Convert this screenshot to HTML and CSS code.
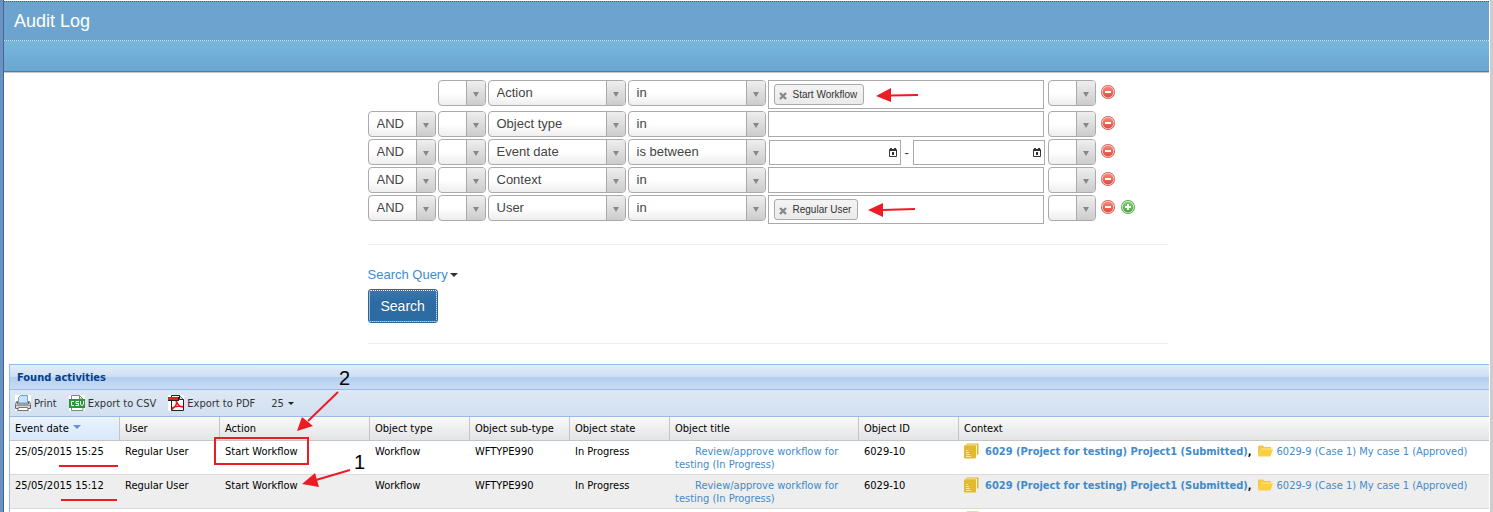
FILE: index.html
```
<!DOCTYPE html>
<html lang="en">
<head>
<meta charset="utf-8">
<title>Audit Log</title>
<link rel="stylesheet" href="styles.css">
</head>
<body>
<svg class="defs" aria-hidden="true">
  <defs>
    <linearGradient id="red" x2="0" y2="1"><stop offset="0" stop-color="#f58a7a"/><stop offset="1" stop-color="#e2483b"/></linearGradient>
    <linearGradient id="green" x2="0" y2="1"><stop offset="0" stop-color="#8fd07a"/><stop offset="1" stop-color="#46a53c"/></linearGradient>
    <symbol id="minus" viewBox="0 0 14 14"><circle cx="7" cy="7" r="7" fill="#c9594f"/><circle cx="7" cy="7" r="6.200" fill="#fbd0c9"/><circle cx="7" cy="7" r="5.400" fill="url(#red)"/><rect x="4" y="6" width="6" height="2" fill="#fff"/></symbol>
    <symbol id="plus" viewBox="0 0 14 14"><circle cx="7" cy="7" r="7" fill="#55a04e"/><circle cx="7" cy="7" r="6.200" fill="#d4efca"/><circle cx="7" cy="7" r="5.400" fill="url(#green)"/><path d="M4 6h2V4h2v2h2v2H8v2H6V8H4z" fill="#fff"/></symbol>
    <symbol id="calendar" viewBox="0 0 8 9"><path d="M.5 1.5h7v7h-7z" fill="#fff" stroke="#333"/><path d="M0 2h8v1H0zM1 0h2v2H1zM5 0h2v2H5zM3 4h2v3H3z" fill="#333"/></symbol>
    <symbol id="book" viewBox="0 0 15 16"><path d="M1 2.500 3 .500h11.500V11l-2 1.500z" fill="#e2b534"/><path d="M1.500 2h11v11" fill="none" stroke="#fff3c4"/><rect y="2.500" width="12" height="13" rx="1" fill="#e2b92f"/><path d="M2 7.500h1.500M2 9.500h3M2 11.500h4M2 13.500h5" stroke="#fbe9a8"/></symbol>
    <symbol id="folder" viewBox="0 0 15 12"><path d="M0 11V1.500L1 .500h4L6.500 2H13v3H3z" fill="#f2c84b"/><path d="M0 11.500 3.200 4H15L12.500 11.500z" fill="#fbd03e"/><path d="M3.200 4H14.500" stroke="#ffe690"/></symbol>
  </defs>
</svg>

<div class="page">
  <header class="banner">
    <h1 class="banner-title">Audit Log</h1>
    <div class="banner-strip"></div>
  </header>

  <main>
    <form class="query">
      <div class="criterion">
        <span></span>
        <span class="pick"><select aria-label="Open bracket"><option></option></select></span>
        <span class="pick"><select aria-label="Field"><option>Action</option></select></span>
        <span class="pick"><select aria-label="Operator"><option>in</option></select></span>
        <div class="tokens tokens-filled"><span class="token"><button type="button" class="token-remove" aria-label="Remove Start Workflow"><svg viewBox="0 0 8 8"><path d="M1 1l6 6M7 1l-6 6" stroke="#888" stroke-width="2.400"/></svg></button>Start Workflow</span></div>
        <span class="pick"><select aria-label="Close bracket"><option></option></select></span>
        <div class="row-tools"><button type="button" class="tool" aria-label="Remove condition"><svg><use href="#minus"/></svg></button></div>
      </div>
      <div class="criterion">
        <span class="pick"><select aria-label="Logic"><option>AND</option></select></span>
        <span class="pick"><select aria-label="Open bracket"><option></option></select></span>
        <span class="pick"><select aria-label="Field"><option>Object type</option></select></span>
        <span class="pick"><select aria-label="Operator"><option>in</option></select></span>
        <input class="tokens" type="text" aria-label="Object type value">
        <span class="pick"><select aria-label="Close bracket"><option></option></select></span>
        <div class="row-tools"><button type="button" class="tool" aria-label="Remove condition"><svg><use href="#minus"/></svg></button></div>
      </div>
      <div class="criterion">
        <span class="pick"><select aria-label="Logic"><option>AND</option></select></span>
        <span class="pick"><select aria-label="Open bracket"><option></option></select></span>
        <span class="pick"><select aria-label="Field"><option>Event date</option></select></span>
        <span class="pick"><select aria-label="Operator"><option>is between</option></select></span>
        <div class="range">
          <span class="date"><input type="text" aria-label="From date"><svg><use href="#calendar"/></svg></span>
          <span>-</span>
          <span class="date"><input type="text" aria-label="To date"><svg><use href="#calendar"/></svg></span>
        </div>
        <span class="pick"><select aria-label="Close bracket"><option></option></select></span>
        <div class="row-tools"><button type="button" class="tool" aria-label="Remove condition"><svg><use href="#minus"/></svg></button></div>
      </div>
      <div class="criterion">
        <span class="pick"><select aria-label="Logic"><option>AND</option></select></span>
        <span class="pick"><select aria-label="Open bracket"><option></option></select></span>
        <span class="pick"><select aria-label="Field"><option>Context</option></select></span>
        <span class="pick"><select aria-label="Operator"><option>in</option></select></span>
        <input class="tokens" type="text" aria-label="Context value">
        <span class="pick"><select aria-label="Close bracket"><option></option></select></span>
        <div class="row-tools"><button type="button" class="tool" aria-label="Remove condition"><svg><use href="#minus"/></svg></button></div>
      </div>
      <div class="criterion">
        <span class="pick"><select aria-label="Logic"><option>AND</option></select></span>
        <span class="pick"><select aria-label="Open bracket"><option></option></select></span>
        <span class="pick"><select aria-label="Field"><option>User</option></select></span>
        <span class="pick"><select aria-label="Operator"><option>in</option></select></span>
        <div class="tokens tokens-filled"><span class="token"><button type="button" class="token-remove" aria-label="Remove Regular User"><svg viewBox="0 0 8 8"><path d="M1 1l6 6M7 1l-6 6" stroke="#888" stroke-width="2.400"/></svg></button>Regular User</span></div>
        <span class="pick"><select aria-label="Close bracket"><option></option></select></span>
        <div class="row-tools"><button type="button" class="tool" aria-label="Remove condition"><svg><use href="#minus"/></svg></button><button type="button" class="tool" aria-label="Add condition"><svg><use href="#plus"/></svg></button></div>
      </div>

      <div class="actions">
        <a href="#" class="query-link">Search Query<span class="caret"></span></a>
        <button type="submit" class="search">Search</button>
      </div>
    </form>

    <section class="panel">
      <h2 class="panel-title">Found activities</h2>
      <div class="toolbar">
        <button type="button"><svg class="icon" viewBox="0 0 16 16"><path fill="#fff" d="M0 0h16v16H0z"/><path d="M3.500 8V2.500l2-2H12.500V8z" fill="#c9e3fb" stroke="#6d9fd6"/><path d="M2.500 6.500H1.500l-1 3v4h15v-4l-1-3h-1v2.500h-11z" fill="#d8d8d8" stroke="#666"/><path d="M1 10.500h14" stroke="#999"/><path d="M3.500 12.500h9l1 3h-11z" fill="#fff" stroke="#777"/></svg>Print</button>
        <button type="button"><svg class="icon" viewBox="0 0 16 16"><path fill="#fff" d="M0 0h16v16H0z"/><path d="M2.500.500h8L14 4v11.500H2.500z" fill="#fff" stroke="#5aa55a"/><path d="M10.500.500V4H14" fill="none" stroke="#5aa55a"/><path d="M0 4h16v9H0z" fill="#319536"/><path d="M5 6.500H2.500v4H5M10 6.500H7v2h2.500v2H6.500M11.500 6v3l1 1.500h1l1-1.500V6" fill="none" stroke="#fff"/></svg>Export to CSV</button>
        <button type="button"><svg class="icon" viewBox="0 0 16 16"><path fill="#fff" d="M0 0h16v16H0z"/><path d="M3.500.500h8l4 4v11h-12z" fill="#fff" stroke="#222"/><path d="M11.500.500v4h4" fill="#ddd" stroke="#222"/><path d="M0 2h11v4H0z" fill="#222"/><path d="M0 2h10v3H0z" fill="#ed1c1c"/><path d="M7.500 6.500c2 0 1 5-3 7.500-1-1.500 3-3.500 10-2.500 1 1-4 1-6-5" fill="none" stroke="#e51515" stroke-width="1.400"/></svg>Export to PDF</button>
        <button type="button" class="page-size">25<span class="caret caret-small"></span></button>
      </div>
      <table class="grid">
        <colgroup><col class="w-date"><col class="w-user"><col class="w-action"><col class="w-std"><col class="w-std"><col class="w-std"><col class="w-title"><col class="w-std"><col></colgroup>
        <thead>
          <tr><th class="sorted">Event date<span class="sort"></span></th><th>User</th><th>Action</th><th>Object type</th><th>Object sub-type</th><th>Object state</th><th>Object title</th><th>Object ID</th><th>Context</th></tr>
        </thead>
        <tbody>
          <tr><td>25/05/2015 15:25</td><td>Regular User</td><td>Start Workflow</td><td>Workflow</td><td>WFTYPE990</td><td>In Progress</td><td><a href="#" class="title-link">Review/approve workflow for testing (In Progress)</a></td><td>6029-10</td><td><div class="context"><svg class="book"><use href="#book"/></svg><b><a href="#">6029 (Project for testing) Project1 (Submitted)</a>,</b><svg class="folder"><use href="#folder"/></svg><a href="#">6029-9 (Case 1) My case 1 (Approved)</a></div></td></tr>
          <tr><td>25/05/2015 15:12</td><td>Regular User</td><td>Start Workflow</td><td>Workflow</td><td>WFTYPE990</td><td>In Progress</td><td><a href="#" class="title-link">Review/approve workflow for testing (In Progress)</a></td><td>6029-10</td><td><div class="context"><svg class="book"><use href="#book"/></svg><b><a href="#">6029 (Project for testing) Project1 (Submitted)</a>,</b><svg class="folder"><use href="#folder"/></svg><a href="#">6029-9 (Case 1) My case 1 (Approved)</a></div></td></tr>
          <tr><td></td><td></td><td></td><td></td><td></td><td></td><td></td><td></td><td><div class="context"><svg class="book"><use href="#book"/></svg></div></td></tr>
        </tbody>
      </table>
    </section>
  </main>
</div>

<svg class="notes">
  <g fill="#ed1c24">
    <path d="M876 96l15-8v14zM868 210l15-7v14zM297 431l5-14 11 9zM302 484l13-11 4 14z"/>
  </g>
  <g fill="none" stroke="#ed1c24" stroke-width="2">
    <path d="M890 95.500 918 95M882 210l33-1M308 421l30-29M316 480l34-10M59 466h59M61 500h56M215 438h93v26h-93z"/>
  </g>
  <text x="339" y="385">2</text>
  <text x="354" y="469">1</text>
</svg>
</body>
</html>
```
FILE: styles.css
```
* { box-sizing: border-box; }

body {
  margin: 0;
  height: 100vh;
  overflow: hidden;
  position: relative;
  background: #fff;
  color: #333;
  font-family: "Liberation Sans", Arial, sans-serif;
  font-size: 13px;
}

button, input, select { font: inherit; color: inherit; margin: 0; }
button { cursor: pointer; }
a { color: #428bca; text-decoration: none; }
.defs { position: absolute; width: 0; height: 0; }

.page {
  height: 100vh;
  overflow: hidden;
  border-left: 3px solid #6a93c1;
  border-right: 3px solid #cdcdcd;
  padding-right: 1px;
}
.page > * { border-left: 1px solid #3f6797; }
main { min-height: 100vh; }

.banner { padding-top: 1px; }
.banner-title {
  margin: 0;
  padding: 0 10px;
  height: 40px;
  line-height: 39px;
  border-top: 1px dotted #2f6f5c;
  border-bottom: 1px dotted #d5e6f1;
  background: #6ca4cf;
  color: #fff;
  font-size: 18px;
  font-weight: normal;
}
.banner-strip {
  height: 32px;
  background: linear-gradient(#76b7dd, #6ba5d0);
  border-bottom: 1px solid #c5c5c5;
  box-shadow: inset 0 -1px #437fb4;
}

.query {
  width: 842px;
  margin: 0 auto;
  padding: 7px 0 0 42px;
  display: flex;
  flex-direction: column;
  gap: 2px;
}
.criterion {
  display: grid;
  grid-template-columns: 68px 48px 138px 138px 278px 48px auto;
  gap: 2px;
  align-items: start;
}

.pick { position: relative; display: block; height: 26px; }
.pick select {
  appearance: none;
  width: 100%;
  height: 26px;
  padding: 0 20px 1px 8px;
  border: 1px solid #aaa;
  border-radius: 4px;
  background: linear-gradient(#fff 50%, #eee);
  color: #444;
}
.pick::before {
  content: "";
  position: absolute;
  top: 1px;
  right: 1px;
  bottom: 1px;
  width: 18px;
  border-left: 1px solid #aaa;
  border-radius: 0 3px 3px 0;
  background: linear-gradient(#eee, #ccc);
  pointer-events: none;
}
.pick::after {
  content: "";
  position: absolute;
  top: 12px;
  right: 7px;
  border: 3px solid transparent;
  border-top: 5px solid #888;
  border-bottom: 0;
  pointer-events: none;
}

.tokens {
  width: 276px;
  height: 26px;
  border: 1px solid #aaa;
  background: #fff;
}
.tokens-filled { height: 29px; padding: 3px 5px; }
.token {
  display: inline-flex;
  align-items: center;
  gap: 6px;
  height: 21px;
  padding: 0 6px 0 4px;
  border: 1px solid #aaa;
  border-radius: 3px;
  background: linear-gradient(#f4f4f4, #eaeaea);
  font-size: 10px;
}
.token-remove { display: flex; padding: 2px 0 0; border: 0; background: none; }
.token-remove svg { width: 8px; height: 8px; }

.range { display: flex; align-items: center; gap: 4px; padding: 1px 1px 0; }
.date {
  display: flex;
  align-items: center;
  width: 132px;
  height: 25px;
  padding-right: 3px;
  border: 1px solid #aaa;
}
.date input { flex: 1; min-width: 0; height: 20px; border: 0; background: none; }
.date svg { width: 8px; height: 9px; }

.row-tools { display: flex; gap: 6px; padding: 5px 0 0 3px; }
.tool { display: flex; padding: 0; border: 0; background: none; }
.tool svg { width: 14px; height: 14px; }

.actions {
  display: flex;
  flex-direction: column;
  align-items: flex-start;
  width: 800px;
  margin-top: 18px;
  padding: 21px 0 20px;
  gap: 5px;
  border: solid #eee;
  border-width: 1px 0;
}
.query-link { display: flex; align-items: center; line-height: 18px; }
.caret {
  margin-left: 2px;
  border: 4px solid transparent;
  border-top-color: #333;
  border-bottom: 0;
}
.caret-small { border-width: 3px 3px 0; border-top-color: #222; margin-left: 4px; }
.search {
  height: 34px;
  padding: 0 12px;
  border: 1px solid #2b669a;
  border-radius: 3px;
  outline: 1px dotted #fff;
  outline-offset: -2px;
  background: linear-gradient(#3577b1, #2d6ca2 40%);
  color: #fff;
  font-size: 14px;
  text-shadow: 0 -1px rgba(0, 0, 0, .2);
}

.panel {
  margin: 20px 0 0 5px;
  border: solid #99bbe8;
  border-width: 1px 0 0 1px;
  color: #000;
  font-family: "DejaVu Sans Condensed", "DejaVu Sans", sans-serif;
  font-size: 11px;
  line-height: 13px;
}
.panel-title {
  margin: 0;
  padding: 6px 7px 5px;
  border-bottom: 1px solid #99bbe8;
  background: linear-gradient(#e4eefa, #cddef3 50%, #b3ceef 50%, #cadcf5);
  color: #04408c;
  font-size: 11px;
  line-height: 13px;
}
.toolbar {
  display: flex;
  align-items: center;
  height: 27px;
  padding: 0 5px;
  gap: 12px;
  border-bottom: 1px solid #99bbe8;
  background: linear-gradient(#dde8f3, #d2e0f1);
  color: #333;
}
.toolbar button {
  display: flex;
  align-items: center;
  gap: 3px;
  padding: 0;
  border: 0;
  background: none;
}
.toolbar .page-size { gap: 0; margin-left: 4px; }
.icon { width: 16px; height: 16px; }

.grid { width: 100%; table-layout: fixed; border-collapse: separate; border-spacing: 0; }
.grid th {
  height: 24px;
  padding: 0 5px;
  border-right: 1px solid #c5c5c5;
  border-bottom: 1px solid #c5c5c5;
  background: linear-gradient(#f9f9f9, #e3e4e6);
  font-weight: normal;
  text-align: left;
  white-space: nowrap;
}
.grid th:last-child { border-right: 0; }
.grid .sorted { background: linear-gradient(#ebf3fd, #d9e8fb); }
.sort {
  display: inline-block;
  margin: 0 0 3px 4px;
  border: 4px solid transparent;
  border-top-color: #6593cf;
  border-bottom: 0;
}
.grid td {
  height: 34px;
  padding: 4px 5px 3px;
  border-bottom: 1px solid #dadada;
  vertical-align: top;
}
.grid tr:nth-child(even) td { background: #eee; }
.w-date { width: 110px; }
.w-user { width: 100px; }
.w-action { width: 150px; }
.w-std { width: 100px; }
.w-title { width: 189px; }
.title-link { display: block; text-indent: 20px; }

.context { display: flex; height: 16px; margin-top: -2px; white-space: nowrap; line-height: 17px; }
.book { flex: none; width: 15px; height: 16px; margin-right: 6px; }
.folder { flex: none; width: 15px; height: 12px; margin: 2px 4px 0 6px; }
.context b { color: #000; }

.notes {
  position: absolute;
  top: 0;
  left: 0;
  width: 100%;
  height: 100%;
  pointer-events: none;
}
.notes text { fill: #000; font-size: 20px; }
```
